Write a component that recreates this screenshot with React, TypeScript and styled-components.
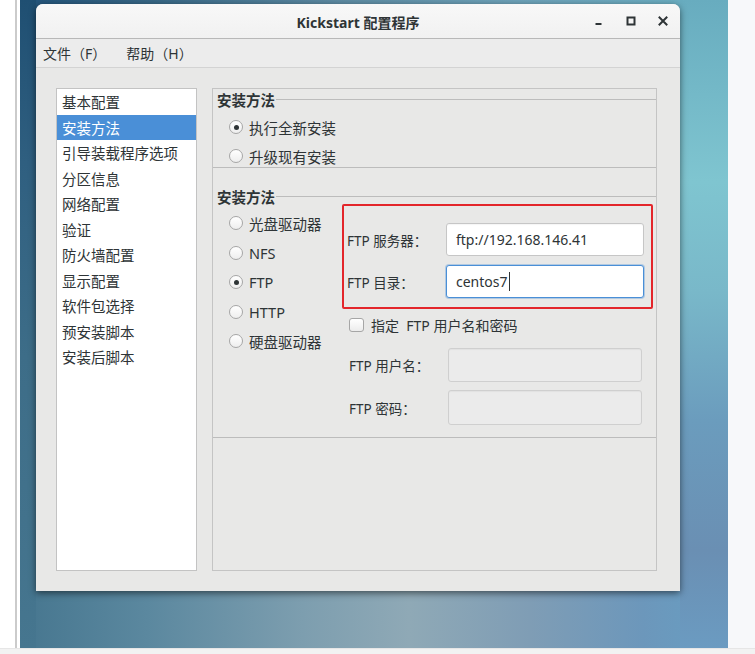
import React from 'react';
import styled, { createGlobalStyle } from 'styled-components';

const GlobalStyle = createGlobalStyle`
  html, body {
    margin: 0;
    padding: 0;
    background: #ffffff;
  }

  body {
    font-family: "Noto Sans", "Noto Sans CJK SC", sans-serif;
    color: #2e3436;
  }
`;

const Page = styled.div`
  width: 755px;
  height: 654px;
  display: flex;
  flex-direction: column;
  overflow: hidden;
`;

const Shot = styled.div`
  display: flex;
  height: 648px;
`;

const Gutter = styled.div`
  width: 15px;
  background: #ffffff;
`;

const QuoteRule = styled.div`
  width: 2px;
  margin-right: 3px;
  background: #cbcbcb;
`;

const Desktop = styled.div`
  width: 708px;
  box-sizing: border-box;
  padding: 4px 0 0 16px;
  background:
    linear-gradient(180deg, #1f4f72 0%, #2f5f80 25%, #3d6d88 55%, #46768f 100%) left top / 16px 100% no-repeat,
    linear-gradient(180deg, #68acbf 0%, #7fc5d0 28%, #79b8c9 45%, #6b9cbd 65%, #6a8fb3 85%, #6b9bc1 100%) right top / 48px 100% no-repeat,
    linear-gradient(90deg, #46768f 0%, #5b889f 18%, #7d9eaf 40%, #8fa9b6 55%, #7f9db5 72%, #6c97bb 88%, #679fc3 100%) left bottom / 100% 60px no-repeat,
    linear-gradient(90deg, #22537a 0%, #3a6a88 20%, #5e8ca4 45%, #6ea3ba 70%, #6ab1c4 100%);
`;

const RightSide = styled.div`
  flex: 1;
  background: #f7f8fa;
`;

const BottomBand = styled.div`
  flex: 1;
  background: #f2f2f2;
  border-top: 1px solid #e6e6e6;
`;

const Window = styled.div`
  width: 644px;
  height: 587px;
  display: flex;
  flex-direction: column;
  background: #e8e8e7;
  border-radius: 7px 7px 0 0;
  box-shadow: 0 2px 7px rgba(0, 0, 0, 0.55);
  overflow: hidden;
`;

const TitleBar = styled.div`
  height: 34px;
  display: grid;
  grid-template-columns: 1fr auto 1fr;
  align-items: center;
  background: linear-gradient(180deg, #f8f8f8 0%, #f1f1f1 100%);
  border-bottom: 1px solid #b8b8b8;
`;

const Title = styled.div`
  grid-column: 2;
  font-size: 14px;
  font-weight: 700;
  color: #2e3436;
  padding-top: 1px;
`;

const Controls = styled.div`
  grid-column: 3;
  display: flex;
  justify-content: flex-end;
  padding-right: 1px;
`;

const ControlButton = styled.div`
  width: 32px;
  height: 34px;
  display: flex;
  align-items: center;
  justify-content: center;
`;

const MenuBar = styled.div`
  height: 28px;
  display: flex;
  align-items: center;
  gap: 20px;
  padding-left: 7px;
  background: #ececec;
  border-bottom: 1px solid #d3d3d3;
`;

const MenuItem = styled.span`
  font-size: 14px;
  color: #2e3436;
`;

const Body = styled.div`
  flex: 1;
  display: flex;
  gap: 15px;
  padding: 20px 23px 20px 20px;
`;

const NavList = styled.div`
  width: 141px;
  box-sizing: border-box;
  background: #ffffff;
  border: 1px solid #c3c3c3;
`;

const NavItem = styled.div<{ $active?: boolean }>`
  height: 25.5px;
  display: flex;
  align-items: center;
  padding-left: 5px;
  font-size: 14.5px;
  background: ${(p) => (p.$active ? '#4a8fd7' : 'transparent')};
  color: ${(p) => (p.$active ? '#ffffff' : '#2e3436')};
`;

const Panel = styled.div`
  flex: 1;
  box-sizing: border-box;
  border: 1px solid #c4c4c4;
`;

const Group = styled.div<{ $gapTop: number }>`
  margin-top: ${(p) => p.$gapTop}px;
`;

const GroupTitle = styled.div`
  height: 18px;
  display: flex;
  align-items: center;
  padding-left: 4px;
`;

const GroupLabel = styled.span`
  font-size: 14.5px;
  font-weight: 700;
  color: #2e3436;
`;

const GroupLine = styled.div`
  flex: 1;
  height: 1px;
  margin-left: 1px;
  background: #bcbcbc;
`;

const GroupBody = styled.div`
  border-bottom: 1px solid #bcbcbc;
`;

const RadioColumn = styled.div<{ $gap: number; $padTop: number }>`
  display: flex;
  flex-direction: column;
  gap: ${(p) => p.$gap}px;
  padding: ${(p) => p.$padTop}px 0 0 16px;
`;

const RadioRow = styled.div`
  height: 22px;
  display: flex;
  align-items: center;
  gap: 6px;
  font-size: 14.5px;
  color: #2e3436;
  white-space: nowrap;
`;

const RadioDot = styled.span<{ $checked?: boolean }>`
  width: 14px;
  height: 14px;
  box-sizing: border-box;
  border-radius: 50%;
  border: 1px solid #a6a6a6;
  background: linear-gradient(180deg, #ffffff 0%, #eeeeee 100%);
  display: flex;
  align-items: center;
  justify-content: center;

  &::after {
    content: '';
    width: 5px;
    height: 5px;
    border-radius: 50%;
    background: ${(p) => (p.$checked ? '#2e3436' : 'transparent')};
  }
`;

const MethodBody = styled.div`
  display: flex;
  border-bottom: 1px solid #bcbcbc;
`;

const MethodRadios = styled.div`
  width: 129px;
  flex-shrink: 0;
`;

const FtpForm = styled.div`
  width: 311px;
  margin-top: -1px;
  padding-bottom: 12px;
`;

const Highlight = styled.div`
  border: 2px solid #e3262b;
  border-radius: 2px;
  padding: 17px 7px 9px 3px;
  display: flex;
  flex-direction: column;
  gap: 9px;
`;

const FieldRow = styled.div<{ $indent?: number }>`
  display: flex;
  align-items: center;
  padding-left: ${(p) => p.$indent ?? 0}px;
`;

const FieldLabel = styled.span`
  width: 99px;
  flex-shrink: 0;
  font-size: 13.5px;
  color: #2e3436;
  white-space: nowrap;
`;

const Input = styled.div<{ $focused?: boolean; $disabled?: boolean; $w: number; $h: number }>`
  width: ${(p) => p.$w}px;
  height: ${(p) => p.$h}px;
  box-sizing: border-box;
  display: flex;
  align-items: center;
  padding-left: 9px;
  border-radius: 3px;
  font-size: 14px;
  color: #2e3436;
  background: ${(p) => (p.$disabled ? '#ebebeb' : '#ffffff')};
  border: 1px solid ${(p) => (p.$focused ? '#4a8fd7' : p.$disabled ? '#cfcfcf' : '#c6c6c6')};
  box-shadow: ${(p) => (p.$focused ? '0 0 0 1px rgba(74, 143, 215, 0.35)' : 'inset 0 1px 1px rgba(0, 0, 0, 0.04)')};
`;

const Caret = styled.span`
  width: 1px;
  height: 19px;
  margin-left: 1px;
  background: #2e3436;
`;

const CheckRow = styled.div`
  height: 22px;
  margin-top: 5px;
  padding-left: 7px;
  display: flex;
  align-items: center;
  gap: 7px;
  font-size: 14px;
  color: #2e3436;
`;

const CheckBox = styled.span`
  width: 15px;
  height: 14px;
  box-sizing: border-box;
  border: 1px solid #a6a6a6;
  border-radius: 3px;
  background: linear-gradient(180deg, #ffffff 0%, #ececec 100%);
`;

const CredRows = styled.div`
  margin-top: 12px;
  display: flex;
  flex-direction: column;
  gap: 8px;
`;

const MinimizeIcon = () => (
  <svg width="10" height="10" viewBox="0 0 10 10">
    <rect x="1.5" y="7" width="6" height="2" fill="#2e3436" />
  </svg>
);

const MaximizeIcon = () => (
  <svg width="10" height="10" viewBox="0 0 10 10">
    <rect x="1.5" y="1.5" width="7" height="7" fill="none" stroke="#2e3436" strokeWidth="2" />
  </svg>
);

const CloseIcon = () => (
  <svg width="10" height="10" viewBox="0 0 10 10">
    <path d="M1.5 1.5 L8.5 8.5 M8.5 1.5 L1.5 8.5" stroke="#2e3436" strokeWidth="2" strokeLinecap="square" />
  </svg>
);

const navItems = [
  '基本配置',
  '安装方法',
  '引导装载程序选项',
  '分区信息',
  '网络配置',
  '验证',
  '防火墙配置',
  '显示配置',
  '软件包选择',
  '预安装脚本',
  '安装后脚本',
];

const methods = [
  { label: '光盘驱动器', checked: false },
  { label: 'NFS', checked: false },
  { label: 'FTP', checked: true },
  { label: 'HTTP', checked: false },
  { label: '硬盘驱动器', checked: false },
];

const App: React.FC = () => {
  return (
    <>
      <GlobalStyle />
      <Page>
        <Shot>
          <Gutter />
          <QuoteRule />
          <Desktop>
            <Window>
              <TitleBar>
                <Title>Kickstart 配置程序</Title>
                <Controls>
                  <ControlButton>
                    <MinimizeIcon />
                  </ControlButton>
                  <ControlButton>
                    <MaximizeIcon />
                  </ControlButton>
                  <ControlButton>
                    <CloseIcon />
                  </ControlButton>
                </Controls>
              </TitleBar>
              <MenuBar>
                <MenuItem>文件（F）</MenuItem>
                <MenuItem>帮助（H）</MenuItem>
              </MenuBar>
              <Body>
                <NavList>
                  {navItems.map((item) => (
                    <NavItem key={item} $active={item === '安装方法'}>
                      {item}
                    </NavItem>
                  ))}
                </NavList>
                <Panel>
                  <Group $gapTop={1}>
                    <GroupTitle>
                      <GroupLabel>安装方法</GroupLabel>
                      <GroupLine />
                    </GroupTitle>
                    <GroupBody>
                      <RadioColumn $gap={7} $padTop={8}>
                        <RadioRow>
                          <RadioDot $checked />
                          执行全新安装
                        </RadioRow>
                        <RadioRow>
                          <RadioDot />
                          升级现有安装
                        </RadioRow>
                      </RadioColumn>
                    </GroupBody>
                  </Group>
                  <Group $gapTop={19}>
                    <GroupTitle>
                      <GroupLabel>安装方法</GroupLabel>
                      <GroupLine />
                    </GroupTitle>
                    <MethodBody>
                      <MethodRadios>
                        <RadioColumn $gap={7.5} $padTop={7}>
                          {methods.map((m) => (
                            <RadioRow key={m.label}>
                              <RadioDot $checked={m.checked} />
                              {m.label}
                            </RadioRow>
                          ))}
                        </RadioColumn>
                      </MethodRadios>
                      <FtpForm>
                        <Highlight>
                          <FieldRow>
                            <FieldLabel>FTP 服务器：</FieldLabel>
                            <Input $w={198} $h={33}>ftp://192.168.146.41</Input>
                          </FieldRow>
                          <FieldRow>
                            <FieldLabel>FTP 目录：</FieldLabel>
                            <Input $w={198} $h={33} $focused>
                              centos7
                              <Caret />
                            </Input>
                          </FieldRow>
                        </Highlight>
                        <CheckRow>
                          <CheckBox />
                          指定&nbsp; FTP 用户名和密码
                        </CheckRow>
                        <CredRows>
                          <FieldRow $indent={7}>
                            <FieldLabel>FTP 用户名：</FieldLabel>
                            <Input $w={194} $h={34} $disabled />
                          </FieldRow>
                          <FieldRow $indent={7}>
                            <FieldLabel>FTP 密码：</FieldLabel>
                            <Input $w={194} $h={35} $disabled />
                          </FieldRow>
                        </CredRows>
                      </FtpForm>
                    </MethodBody>
                  </Group>
                </Panel>
              </Body>
            </Window>
          </Desktop>
          <RightSide />
        </Shot>
        <BottomBand />
      </Page>
    </>
  );
};

export default App;
